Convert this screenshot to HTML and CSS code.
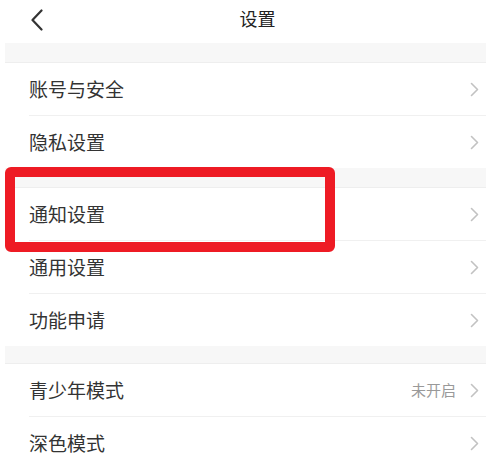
FILE: index.html
```html
<!DOCTYPE html>
<html lang="zh">
<head>
<meta charset="utf-8">
<title>设置</title>
<link rel="stylesheet" href="styles.css">
</head>
<body>
<div class="page">
  <header class="header">
    <svg class="back" width="14" height="22" viewBox="0 0 14 22"><path d="M11.5 1.5 L2.5 11 L11.5 20.5" fill="none" stroke="#333" stroke-width="2.2" stroke-linecap="round" stroke-linejoin="round"/></svg>
    <div class="title">设置</div>
  </header>

  <div class="band"></div>
  <div class="group">
    <div class="row"><span class="label">账号与安全</span><span class="right"><svg class="chev" width="9" height="15" viewBox="0 0 9 15"><path d="M1.5 1.5 L7.5 7.5 L1.5 13.5" fill="none" stroke="#c2c2c2" stroke-width="1.6" stroke-linecap="round" stroke-linejoin="round"/></svg></span></div>
    <div class="row"><span class="label">隐私设置</span><span class="right"><svg class="chev" width="9" height="15" viewBox="0 0 9 15"><path d="M1.5 1.5 L7.5 7.5 L1.5 13.5" fill="none" stroke="#c2c2c2" stroke-width="1.6" stroke-linecap="round" stroke-linejoin="round"/></svg></span></div>
  </div>

  <div class="band"></div>
  <div class="group">
    <div class="row"><span class="label">通知设置</span><span class="right"><svg class="chev" width="9" height="15" viewBox="0 0 9 15"><path d="M1.5 1.5 L7.5 7.5 L1.5 13.5" fill="none" stroke="#c2c2c2" stroke-width="1.6" stroke-linecap="round" stroke-linejoin="round"/></svg></span></div>
    <div class="row"><span class="label">通用设置</span><span class="right"><svg class="chev" width="9" height="15" viewBox="0 0 9 15"><path d="M1.5 1.5 L7.5 7.5 L1.5 13.5" fill="none" stroke="#c2c2c2" stroke-width="1.6" stroke-linecap="round" stroke-linejoin="round"/></svg></span></div>
    <div class="row"><span class="label">功能申请</span><span class="right"><svg class="chev" width="9" height="15" viewBox="0 0 9 15"><path d="M1.5 1.5 L7.5 7.5 L1.5 13.5" fill="none" stroke="#c2c2c2" stroke-width="1.6" stroke-linecap="round" stroke-linejoin="round"/></svg></span></div>
  </div>

  <div class="band band-short"></div>
  <div class="group">
    <div class="row"><span class="label">青少年模式</span><span class="right"><span class="value">未开启</span><svg class="chev" width="9" height="15" viewBox="0 0 9 15"><path d="M1.5 1.5 L7.5 7.5 L1.5 13.5" fill="none" stroke="#c2c2c2" stroke-width="1.6" stroke-linecap="round" stroke-linejoin="round"/></svg></span></div>
    <div class="row"><span class="label">深色模式</span><span class="right"><svg class="chev" width="9" height="15" viewBox="0 0 9 15"><path d="M1.5 1.5 L7.5 7.5 L1.5 13.5" fill="none" stroke="#c2c2c2" stroke-width="1.6" stroke-linecap="round" stroke-linejoin="round"/></svg></span></div>
  </div>

  <div class="highlight"></div>
</div>
</body>
</html>
```

FILE: styles.css
```css
html, body {
  margin: 0;
  padding: 0;
  background: #ffffff;
}
body {
  font-family: "Noto Sans CJK SC", "Noto Sans", sans-serif;
  color: #333333;
  overflow: hidden;
}
.page {
  position: relative;
  width: 486px;
  height: 467px;
  padding-left: 5px;
  box-sizing: border-box;
}
.header {
  height: 43px;
  display: flex;
  align-items: center;
  position: relative;
}
.back {
  margin-left: 25px;
  margin-top: -4px;
  display: block;
}
.title {
  position: absolute;
  left: 0;
  right: 0;
  top: 0;
  height: 36px;
  line-height: 36px;
  text-align: center;
  padding-left: 24px;
  font-size: 18px;
  color: #222222;
}
.band {
  height: 19px;
  background: #f7f7f7;
  border-bottom: 1px solid #eeeeee;
}
.band-short {
  height: 17px;
}
.group {
  padding-left: 24px;
}
.row {
  height: 52px;
  display: flex;
  align-items: center;
  justify-content: space-between;
  border-bottom: 1px solid #f0f0f0;
  padding-right: 7px;
}
.row:last-child {
  border-bottom: none;
}
.label {
  font-size: 19px;
  color: #333333;
  line-height: 1;
  margin-top: -2px;
}
.right {
  display: flex;
  align-items: center;
}
.value {
  font-size: 15px;
  color: #999999;
  margin-right: 14px;
  margin-top: -1px;
}
.chev {
  display: block;
}
.highlight {
  position: absolute;
  left: 5px;
  top: 167px;
  width: 330px;
  height: 85px;
  box-sizing: border-box;
  border: 10px solid #ee1b24;
  border-radius: 6px;
}
```
